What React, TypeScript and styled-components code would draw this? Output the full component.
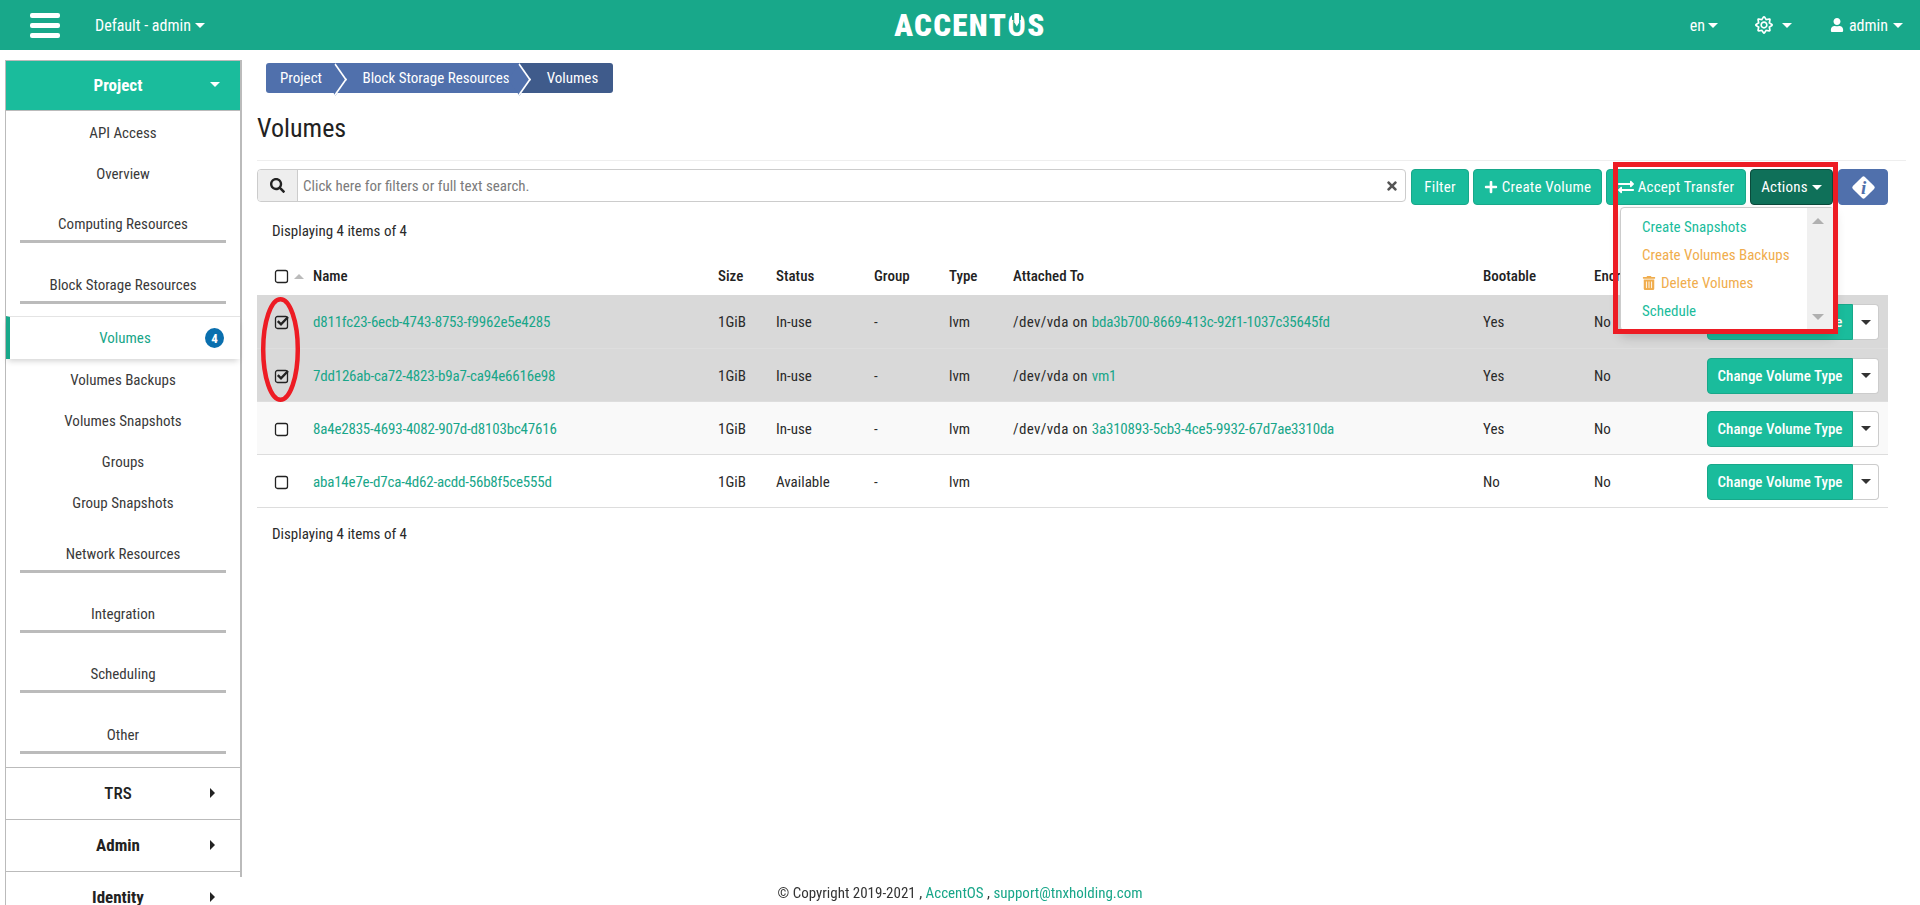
import React from "react";
import styled, { createGlobalStyle, css } from "styled-components";
import { FaSearch, FaTimes, FaPlus, FaExchangeAlt, FaRegSun, FaUser, FaTrashAlt } from "react-icons/fa";

const FONT = `"Roboto", "Open Sans", "Liberation Sans", sans-serif`;
const TEAL = "#1abc9c";
const BAR = "#18a88a";
const LINK = "#18a689";
const INK = "#2f2f2f";

const Global = createGlobalStyle`
  html, body { margin: 0; padding: 0; height: 905px; overflow: hidden; background: #fff; }
  body { font-family: ${FONT}; font-stretch: 75%; font-size: 15px; color: ${INK}; }
  * { box-sizing: border-box; }
`;

const Page = styled.div`
  width: 1920px;
  height: 905px;
  overflow: hidden;
  position: relative;
`;

/* ---------- caret ---------- */
const Caret = styled.span<{ $dir?: "down" | "up" | "right"; $size?: number; $color?: string }>`
  display: inline-block;
  flex: none;
  width: 0;
  height: 0;
  ${({ $dir = "down", $size = 5, $color = "currentColor" }) =>
    $dir === "down"
      ? css`
          border-left: ${$size}px solid transparent;
          border-right: ${$size}px solid transparent;
          border-top: ${$size}px solid ${$color};
        `
      : $dir === "up"
      ? css`
          border-left: ${$size}px solid transparent;
          border-right: ${$size}px solid transparent;
          border-bottom: ${$size}px solid ${$color};
        `
      : css`
          border-top: ${$size}px solid transparent;
          border-bottom: ${$size}px solid transparent;
          border-left: ${$size}px solid ${$color};
        `}
`;

/* ---------- top bar ---------- */
const TopBar = styled.header`
  height: 50px;
  background: ${BAR};
  color: #fff;
  display: grid;
  grid-template-columns: 1fr auto 1fr;
  align-items: center;
`;
const TopLeft = styled.div`
  display: flex;
  align-items: center;
  padding-left: 30px;
`;
const Burger = styled.div`
  width: 30px;
  display: flex;
  flex-direction: column;
  gap: 5px;
  margin-right: 35px;
  span {
    display: block;
    height: 5px;
    background: #fff;
    border-radius: 2px;
  }
`;
const ProjectPick = styled.div`
  display: flex;
  align-items: center;
  gap: 4px;
  font-size: 16px;
`;
const Logo = styled.div`
  margin-left: 20px;
  font-weight: 900;
  font-stretch: 85%;
  font-size: 31px;
  letter-spacing: 1.4px;
  line-height: 1;
  display: flex;
  align-items: center;
`;
const LogoO = styled.span`
  position: relative;
  font-weight: 600;
  &::before {
    content: "";
    position: absolute;
    left: 50%;
    top: 2px;
    width: 9px;
    height: 8px;
    margin-left: -5px;
    background: ${BAR};
  }
  &::after {
    content: "";
    position: absolute;
    left: 50%;
    top: 3px;
    width: 5px;
    height: 14px;
    margin-left: -3px;
    background: #fff;
    clip-path: polygon(0 0, 100% 0, 100% 70%, 50% 100%, 0 70%);
  }
`;
const TopRight = styled.div`
  display: flex;
  align-items: center;
  justify-content: flex-end;
  font-size: 16px;
  padding-right: 17px;
`;
const NavItem = styled.div<{ $ml?: number; $gap?: number }>`
  display: flex;
  align-items: center;
  gap: ${({ $gap = 3 }) => $gap}px;
  margin-left: ${({ $ml = 0 }) => $ml}px;
`;

/* ---------- layout ---------- */
const Body = styled.div`
  display: flex;
  height: 855px;
`;

/* ---------- sidebar ---------- */
const Sidebar = styled.nav`
  flex: none;
  width: 237px;
  height: 817px;
  margin: 10px 0 0 5px;
  border-top: 1px solid #bbb;
  border-right: 2px solid #bbb;
  display: flex;
  flex-direction: column;
`;
const PanelHead = styled.div<{ $open?: boolean; $bold?: boolean }>`
  flex: none;
  height: ${({ $open }) => ($open ? 50 : 52)}px;
  padding-bottom: 2px;
  display: grid;
  grid-template-columns: 1fr 30px;
  align-items: center;
  border-left: 1px solid #bbb;
  font-size: 17px;
  font-weight: ${({ $bold }) => ($bold ? 700 : 500)};
  color: ${({ $open }) => ($open ? "#fff" : "#222")};
  background: ${({ $open }) => ($open ? TEAL : "#fff")};
  border-bottom: 1px solid #bbb;
  text-align: center;
  span:first-child {
    padding-left: 20px;
  }
`;
const PanelBody = styled.div`
  flex: none;
  height: 657px;
  padding-top: 1px;
  border-left: 1px solid #bbb;
  border-bottom: 1px solid #bbb;
  display: flex;
  flex-direction: column;
`;
const SideLink = styled.div`
  flex: none;
  height: 41px;
  display: flex;
  align-items: center;
  justify-content: center;
  color: #3a3a3a;
`;
const SideGroup = styled.div<{ $mt: number }>`
  flex: none;
  margin: ${({ $mt }) => $mt}px 14px 0;
  height: 41px;
  border-bottom: 3px solid #bbb;
  display: flex;
  align-items: center;
  justify-content: center;
  padding-top: 5px;
  color: #3a3a3a;
`;
const ActiveLink = styled.div`
  flex: none;
  height: 43px;
  margin-top: 12px;
  border-top: 1px solid #e4e4e4;
  border-left: 4px solid ${BAR};
  box-shadow: 0 4px 6px -2px rgba(0, 0, 0, 0.18);
  display: flex;
  align-items: center;
  justify-content: center;
  position: relative;
  color: ${LINK};
`;
const Badge = styled.span`
  position: absolute;
  right: 16px;
  top: 11px;
  width: 19px;
  height: 20px;
  border-radius: 50%;
  background: #0a6fae;
  color: #fff;
  font-size: 13px;
  font-weight: 700;
  display: flex;
  align-items: center;
  justify-content: center;
`;

/* ---------- main ---------- */
const Main = styled.main`
  flex: 1;
  min-width: 0;
  padding: 13px 14px 0 15px;
`;
const Crumbs = styled.div`
  display: flex;
  height: 30px;
  margin-left: 9px;
  color: #fff;
`;
const Crumb = styled.div<{ $w: number; $pl?: number; $last?: boolean }>`
  width: ${({ $w }) => $w}px;
  padding-left: ${({ $pl = 0 }) => $pl}px;
  flex: none;
  display: flex;
  align-items: center;
  justify-content: center;
  position: relative;
  background: ${({ $last }) => ($last ? "#3f5b8b" : "#5070ac")};
  border-radius: ${({ $last }) => ($last ? "0 3px 3px 0" : "0")};
  &:first-child {
    border-radius: 3px 0 0 3px;
  }
  ${({ $last }) =>
    !$last &&
    css`
      &::after {
        content: "";
        position: absolute;
        z-index: 1;
        right: -10.5px;
        top: 4.5px;
        width: 21px;
        height: 21px;
        transform: scaleX(0.7) rotate(45deg);
        background: inherit;
        border-top: 2px solid #fff;
        border-right: 2px solid #fff;
      }
    `}
`;
const Title = styled.h1`
  margin: 17px 0 0;
  height: 36px;
  line-height: 36px;
  font-size: 26px;
  font-weight: 400;
  color: #222;
`;
const Rule = styled.div`
  height: 1px;
  background: #eee;
  margin-top: 14px;
`;
const Toolbar = styled.div`
  position: relative;
  margin-top: 8px;
  width: 1631px;
  display: flex;
  align-items: flex-start;
  gap: 4px;
`;
const Search = styled.div`
  width: 1149px;
  height: 33px;
  margin-right: 1px;
  border: 1px solid #ccc;
  border-radius: 4px;
  display: flex;
  align-items: stretch;
  background: #fff;
`;
const SearchAddon = styled.div`
  width: 40px;
  background: #eee;
  border-right: 1px solid #ccc;
  border-radius: 3px 0 0 3px;
  display: flex;
  align-items: center;
  justify-content: center;
  color: #222;
`;
const SearchText = styled.div`
  flex: 1;
  padding-left: 5px;
  display: flex;
  align-items: center;
  color: #7b7b7b;
`;
const SearchClear = styled.div`
  width: 26px;
  display: flex;
  align-items: center;
  justify-content: center;
  color: #555;
  font-size: 14px;
`;
const Btn = styled.div<{ $w: number; $dark?: boolean; $info?: boolean }>`
  width: ${({ $w }) => $w}px;
  flex: none;
  height: 36px;
  margin-left: ${({ $info }) => ($info ? "auto" : 0)};
  border-radius: 4px;
  border: 1px solid ${({ $dark, $info }) => ($dark ? "#0a4a3b" : $info ? "#5070ac" : "#18a88a")};
  background: ${({ $dark, $info }) => ($dark ? "#0f7059" : $info ? "#5070ac" : TEAL)};
  color: #fff;
  font-size: 15px;
  letter-spacing: 0.2px;
  display: flex;
  align-items: center;
  justify-content: center;
  gap: 4px;
  white-space: nowrap;
`;
const Diamond = styled.span`
  width: 17px;
  height: 17px;
  background: #fff;
  border-radius: 2px;
  transform: rotate(45deg);
  display: flex;
  align-items: center;
  justify-content: center;
  b {
    display: block;
    transform: rotate(-45deg);
    font-family: "Liberation Serif", serif;
    font-style: italic;
    font-weight: 700;
    font-size: 19px;
    line-height: 1;
    color: #5070ac;
  }
`;
const Menu = styled.div`
  position: absolute;
  z-index: 5;
  left: 1363px;
  top: 38px;
  width: 214px;
  height: 124px;
  background: #fff;
  border: 1px solid #ccc;
  border-radius: 4px;
  box-shadow: 0 6px 12px rgba(0, 0, 0, 0.18);
  display: flex;
`;
const MenuList = styled.div`
  flex: 1;
  padding: 5px 0 0 21px;
`;
const MenuItem = styled.div<{ $warn?: boolean }>`
  height: 28px;
  display: flex;
  align-items: center;
  gap: 5px;
  color: ${({ $warn }) => ($warn ? "#f0ad4e" : TEAL)};
  white-space: nowrap;
`;
const MenuScroll = styled.div`
  width: 26px;
  background: #f0f0f0;
  display: flex;
  flex-direction: column;
  align-items: center;
  justify-content: space-between;
  padding: 10px 4px 10px 0;
`;

const InfoLine = styled.div<{ $mt: number }>`
  margin: ${({ $mt }) => $mt}px 0 0 15px;
  line-height: 20px;
  color: #2a2a2a;
`;

/* ---------- table ---------- */
const Table = styled.table`
  margin-top: 16px;
  width: 1631px;
  table-layout: fixed;
  border-collapse: collapse;
`;
const Th = styled.th`
  height: 38px;
  padding: 0 8px;
  text-align: left;
  font-weight: 500;
  font-size: 15px;
  color: #222;
  white-space: nowrap;
  overflow: hidden;
`;
const Row = styled.tr<{ $selected?: boolean; $alt?: boolean }>`
  background: ${({ $selected, $alt }) => ($selected ? "#d9d9d9" : $alt ? "#f9f9f9" : "#fff")};
  border-bottom: 1px solid ${({ $selected }) => ($selected ? "#dedede" : "#ddd")};
`;
const Td = styled.td`
  height: 53px;
  padding: 2px 8px 0;
  white-space: nowrap;
  color: #2a2a2a;
`;
const CheckCell = styled.div`
  display: flex;
  align-items: center;
  padding-left: 9px;
  gap: 4px;
  height: 100%;
`;
const TLink = styled.span`
  color: ${LINK};
`;
const UuidLink = styled(TLink)`
  letter-spacing: -0.2px;
`;
const Device = styled.span`
  letter-spacing: 0.35px;
`;
const RowAction = styled.div`
  display: flex;
  justify-content: flex-end;
  padding-right: 1px;
`;
const ChangeBtn = styled.div`
  width: 146px;
  height: 36px;
  background: ${TEAL};
  border: 1px solid #18a88a;
  border-radius: 4px 0 0 4px;
  color: #fff;
  font-size: 15px;
  font-weight: 500;
  white-space: nowrap;
  display: flex;
  align-items: center;
  justify-content: center;
`;
const SplitBtn = styled.div`
  width: 26px;
  height: 36px;
  background: #fff;
  border: 1px solid #ccc;
  border-left: none;
  border-radius: 0 4px 4px 0;
  display: flex;
  align-items: center;
  justify-content: center;
  color: #333;
`;

const Footer = styled.footer`
  position: fixed;
  left: 0;
  right: 0;
  bottom: 3px;
  text-align: center;
  color: #333;
`;

/* ---------- annotations ---------- */
const RedBox = styled.div`
  position: absolute;
  z-index: 9;
  left: 1613px;
  top: 162px;
  width: 225px;
  height: 172px;
  border: 5px solid #ed1c24;
  pointer-events: none;
`;
const RedOval = styled.svg`
  position: absolute;
  z-index: 9;
  left: 259px;
  top: 296px;
  width: 44px;
  height: 108px;
`;

const Box = ({ checked }: { checked?: boolean }) => (
  <svg width="16" height="16" viewBox="0 0 16 16" style={{ flex: "none" }} aria-hidden="true">
    <rect x="1.5" y="2.5" width="12" height="12" rx="2" fill={checked ? "none" : "#fff"} stroke="#222" strokeWidth="1.3" />
    {checked && <path d="M3.8 7.2 7 10.4 14 3" fill="none" stroke="#222" strokeWidth="2.4" />}
  </svg>
);

const VOLUMES = [
  { id: "d811fc23-6ecb-4743-8753-f9962e5e4285", status: "In-use", on: "bda3b700-8669-413c-92f1-1037c35645fd", boot: "Yes", sel: true },
  { id: "7dd126ab-ca72-4823-b9a7-ca94e6616e98", status: "In-use", on: "vm1", boot: "Yes", sel: true },
  { id: "8a4e2835-4693-4082-907d-d8103bc47616", status: "In-use", on: "3a310893-5cb3-4ce5-9932-67d7ae3310da", boot: "Yes", alt: true },
  { id: "aba14e7e-d7ca-4d62-acdd-56b8f5ce555d", status: "Available", on: "", boot: "No" },
];

export default function App() {
  return (
    <Page>
      <Global />
      <TopBar>
        <TopLeft>
          <Burger>
            <span />
            <span />
            <span />
          </Burger>
          <ProjectPick>
            Default - admin <Caret />
          </ProjectPick>
        </TopLeft>
        <Logo>
          ACCENT<LogoO>O</LogoO>S
        </Logo>
        <TopRight>
          <NavItem>
            en <Caret />
          </NavItem>
          <NavItem $ml={37} $gap={9}>
            <FaRegSun size={18} /> <Caret />
          </NavItem>
          <NavItem $ml={38} $gap={5}>
            <FaUser size={14} /> admin <Caret />
          </NavItem>
        </TopRight>
      </TopBar>
      <Body>
        <Sidebar>
          <PanelHead $open $bold>
            <span>Project</span>
            <Caret />
          </PanelHead>
          <PanelBody>
            <SideLink>API Access</SideLink>
            <SideLink>Overview</SideLink>
            <SideGroup $mt={8}>Computing Resources</SideGroup>
            <SideGroup $mt={20}>Block Storage Resources</SideGroup>
            <ActiveLink>
              Volumes
              <Badge>4</Badge>
            </ActiveLink>
            <SideLink>Volumes Backups</SideLink>
            <SideLink>Volumes Snapshots</SideLink>
            <SideLink>Groups</SideLink>
            <SideLink>Group Snapshots</SideLink>
            <SideGroup $mt={9}>Network Resources</SideGroup>
            <SideGroup $mt={19}>Integration</SideGroup>
            <SideGroup $mt={19}>Scheduling</SideGroup>
            <SideGroup $mt={20}>Other</SideGroup>
          </PanelBody>
          <PanelHead>
            <span>TRS</span>
            <Caret $dir="right" />
          </PanelHead>
          <PanelHead $bold>
            <span>Admin</span>
            <Caret $dir="right" />
          </PanelHead>
          <PanelHead $bold>
            <span>Identity</span>
            <Caret $dir="right" />
          </PanelHead>
        </Sidebar>
        <Main>
          <Crumbs>
            <Crumb $w={70}>Project</Crumb>
            <Crumb $w={184} $pl={16}>
              Block Storage Resources
            </Crumb>
            <Crumb $w={93} $pl={12} $last>
              Volumes
            </Crumb>
          </Crumbs>
          <Title>Volumes</Title>
          <Rule />
          <Toolbar>
            <Search>
              <SearchAddon>
                <FaSearch />
              </SearchAddon>
              <SearchText>Click here for filters or full text search.</SearchText>
              <SearchClear>
                <FaTimes />
              </SearchClear>
            </Search>
            <Btn $w={58}>Filter</Btn>
            <Btn $w={129}>
              <FaPlus size={14} /> Create Volume
            </Btn>
            <Btn $w={140}>
              <FaExchangeAlt size={16} /> Accept Transfer
            </Btn>
            <Btn $w={83} $dark>
              Actions <Caret />
            </Btn>
            <Btn $w={50} $info>
              <Diamond>
                <b>i</b>
              </Diamond>
            </Btn>
            <Menu>
              <MenuList>
                <MenuItem>Create Snapshots</MenuItem>
                <MenuItem $warn>Create Volumes Backups</MenuItem>
                <MenuItem $warn>
                  <FaTrashAlt size={14} /> Delete Volumes
                </MenuItem>
                <MenuItem>Schedule</MenuItem>
              </MenuList>
              <MenuScroll>
                <Caret $dir="up" $size={6} $color="#b0b0b0" />
                <Caret $size={6} $color="#b0b0b0" />
              </MenuScroll>
            </Menu>
          </Toolbar>
          <InfoLine $mt={16}>Displaying 4 items of 4</InfoLine>
          <Table>
            <colgroup>
              <col style={{ width: 48 }} />
              <col style={{ width: 405 }} />
              <col style={{ width: 58 }} />
              <col style={{ width: 98 }} />
              <col style={{ width: 75 }} />
              <col style={{ width: 64 }} />
              <col style={{ width: 470 }} />
              <col style={{ width: 111 }} />
              <col style={{ width: 110 }} />
              <col />
            </colgroup>
            <thead>
              <tr>
                <Th>
                  <CheckCell>
                    <Box />
                    <Caret $dir="up" $size={5} $color="#bbb" />
                  </CheckCell>
                </Th>
                <Th>Name</Th>
                <Th>Size</Th>
                <Th>Status</Th>
                <Th>Group</Th>
                <Th>Type</Th>
                <Th>Attached To</Th>
                <Th>Bootable</Th>
                <Th>Encrypted</Th>
                <Th />
              </tr>
            </thead>
            <tbody>
              {VOLUMES.map((r) => (
                <Row key={r.id} $selected={r.sel} $alt={r.alt}>
                  <Td>
                    <CheckCell>
                      <Box checked={r.sel} />
                    </CheckCell>
                  </Td>
                  <Td>
                    <UuidLink>{r.id}</UuidLink>
                  </Td>
                  <Td>1GiB</Td>
                  <Td>{r.status}</Td>
                  <Td>-</Td>
                  <Td>lvm</Td>
                  <Td>
                    {r.on && (
                      <>
                        <Device>/dev/vda on </Device>
                        <UuidLink>{r.on}</UuidLink>
                      </>
                    )}
                  </Td>
                  <Td>{r.boot}</Td>
                  <Td>No</Td>
                  <Td>
                    <RowAction>
                      <ChangeBtn>Change Volume Type</ChangeBtn>
                      <SplitBtn>
                        <Caret />
                      </SplitBtn>
                    </RowAction>
                  </Td>
                </Row>
              ))}
            </tbody>
          </Table>
          <InfoLine $mt={16}>Displaying 4 items of 4</InfoLine>
        </Main>
      </Body>
      <Footer>
        © Copyright 2019-2021 , <TLink>AccentOS</TLink> , <TLink>support@tnxholding.com</TLink>
      </Footer>
      <RedBox />
      <RedOval viewBox="0 0 44 108" aria-hidden="true">
        <ellipse cx="21.5" cy="53.5" rx="17.3" ry="50.3" fill="none" stroke="#ed1c24" strokeWidth="4.5" />
      </RedOval>
    </Page>
  );
}
